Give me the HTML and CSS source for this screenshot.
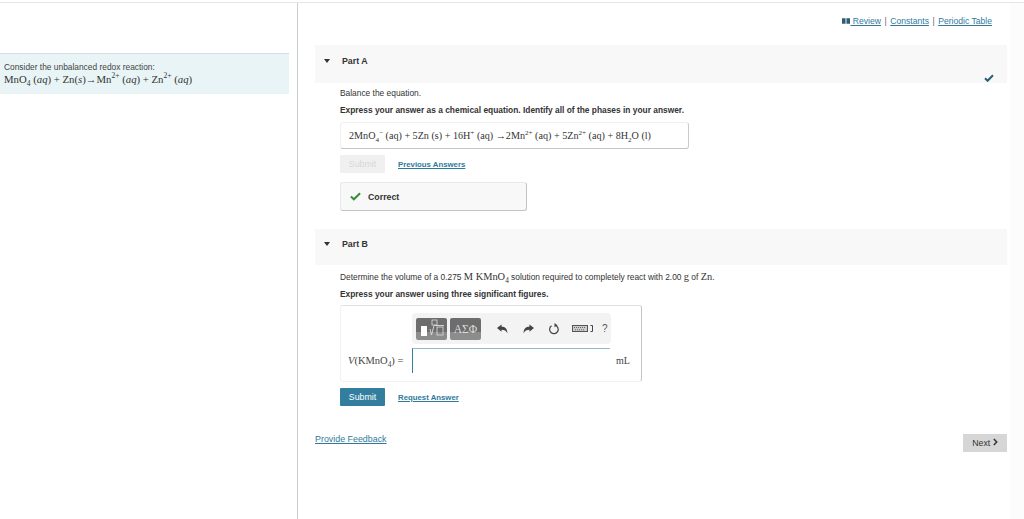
FILE: index.html
```html
<!DOCTYPE html>
<html lang="en">
<head>
<meta charset="utf-8">
<title>Redox reaction</title>
<link rel="stylesheet" href="styles.css">
</head>
<body>
<div class="page">
  <aside class="side">
    <div class="prompt">
      <div>Consider the unbalanced redox reaction:</div>
      <div class="math prompt-eq">MnO<sub>4</sub> (<i>aq</i>) + Zn(<i>s</i>)→Mn<sup>2+</sup> (<i>aq</i>) + Zn<sup>2+</sup> (<i>aq</i>)</div>
    </div>
  </aside>
  <main class="main">
    <nav class="toplinks">
      <svg class="book" viewBox="0 0 9 6" width="8" height="6"><path d="M0 0h4v6H0zM5 0h4v6H5z"/></svg>
      <a>&nbsp;Review</a><span class="sep">|</span><a>Constants</a><span class="sep">|</span><a>Periodic Table</a>
    </nav>

    <section class="part">
      <header class="part-head head-a">
        <span class="caret"></span><strong>Part A</strong>
        <svg class="head-check" viewBox="0 0 10 8" width="10" height="8"><path d="M1 4.2l2.6 2.6L9 1.2" fill="none" stroke="#2b5f75" stroke-width="2"/></svg>
      </header>
      <div class="part-body">
        <p class="line-a1">Balance the equation.</p>
        <p class="bold line-a2">Express your answer as a chemical equation. Identify all of the phases in your answer.</p>
        <div class="answer math">2MnO<sub>4</sub><sup>−</sup> (aq) + 5Zn (s) + 16H<sup>+</sup> (aq) →2Mn<sup>2+</sup> (aq) + 5Zn<sup>2+</sup> (aq) + 8H<sub>2</sub>O (l)</div>
        <div class="actions actions-a">
          <button class="btn btn-off">Submit</button><a class="bold-link">Previous Answers</a>
        </div>
        <div class="correct">
          <svg viewBox="0 0 12 9" width="11" height="9"><path d="M1 4.5l3.2 3L11 1" fill="none" stroke="#3c8a3c" stroke-width="2.200"/></svg>
          <strong>Correct</strong>
        </div>
      </div>
    </section>

    <section class="part part-b">
      <header class="part-head head-b"><span class="caret"></span><strong>Part B</strong></header>
      <div class="part-body">
        <p class="line-b1">Determine the volume of a 0.275 <span class="math mathbig">M KMnO<sub>4</sub></span> solution required to completely react with 2.00 <span class="math mathbig">g</span> of <span class="math mathbig">Zn</span>.</p>
        <p class="bold line-b2">Express your answer using three significant figures.</p>
        <div class="editor">
          <div class="toolbar">
            <div class="tool">
              <svg viewBox="0 0 31 22" width="31" height="22"><rect x="5" y="8" width="6" height="10" fill="#fff"/><rect x="16" y="2" width="5" height="5" fill="none" stroke="#ddd" stroke-width=".8"/><path d="M14 11l1.500 6 2.500-9.500h10" fill="none" stroke="#ddd" stroke-width=".9"/><rect x="21" y="9" width="6" height="8" fill="none" stroke="#ddd" stroke-width=".8"/></svg>
            </div>
            <div class="tool tool-greek math">ΑΣΦ</div>
            <svg class="ic ic-undo" viewBox="0 0 12 10" width="11" height="10"><path d="M0 4l5-4v2.500c4 0 6 2 6.500 7C10 7 8 5.800 5 5.800V8z" fill="#444"/></svg>
            <svg class="ic ic-redo" viewBox="0 0 12 10" width="11" height="10"><path d="M12 4L7 0v2.500C3 2.500 1 4.500.5 9.500 2 7 4 5.800 7 5.800V8z" fill="#444"/></svg>
            <svg class="ic ic-reset" viewBox="0 0 12 12" width="12" height="12"><path d="M7 2.200A4.300 4.300 0 1 1 3.500 2.800" fill="none" stroke="#444" stroke-width="1.200"/><path d="M6.500 0L9.500 2.300 6.500 4.300z" fill="#444"/></svg>
            <svg class="ic ic-keys" viewBox="0 0 22 7" width="22" height="7"><rect x=".5" y=".5" width="15" height="6" fill="#ccc" stroke="#555"/><path d="M2 2.500h12M3 4.800h10" stroke="#666" stroke-dasharray="1 1"/><path d="M18.500 .5h2v6h-2" fill="none" stroke="#444"/></svg>
            <span class="help">?</span>
          </div>
          <div class="input-row">
            <span class="math label"><i>V</i>(KMnO<sub>4</sub>) =</span>
            <div class="field"></div>
            <span class="math unit">mL</span>
          </div>
        </div>
        <div class="actions actions-b">
          <button class="btn btn-on">Submit</button><a class="bold-link">Request Answer</a>
        </div>
      </div>
    </section>

    <footer class="foot">
      <a class="feedback">Provide Feedback</a>
      <button class="next">Next <svg viewBox="0 0 6 9" width="5" height="8"><path d="M1 .8L4.500 4.500 1 8.200" fill="none" stroke="#333" stroke-width="1.800"/></svg></button>
    </footer>
  </main>
  <div class="gutter"></div>
</div>
</body>
</html>
```

FILE: styles.css
```css
* { box-sizing: border-box; }
html, body { margin: 0; height: 100%; overflow: hidden; background: #fff; }
body {
  font-family: "Liberation Sans", Arial, sans-serif;
  font-size: 8.400px;
  color: #333;
}
.page {
  display: flex;
  height: 519px;
  margin-top: 2px;
  border-top: 1px solid #e6e6e6;
  background: #fff;
}
.gutter { width: 14px; flex: none; background: #fcfcfc; }
.side { width: 298px; flex: none; border-right: 1px solid #c9cdd0; padding: 50px 8px 0 0; }
.prompt {
  height: 41px;
  background: #e8f4f6;
  border-top: 1px solid #d5dfe2;
  padding: 8px 0 0 4px;
  line-height: 11px;
  color: #444;
}
.math { font-family: "Liberation Serif", "Times New Roman", serif; }
.prompt-eq { font-size: 10.760px; color: #333; line-height: 13px; }
sub, sup { font-size: 70%; line-height: 0; }
.main { flex: 1; min-width: 0; padding: 0 3px 0 17px; }
.toplinks {
  height: 42px;
  padding-top: 13px;
  padding-right: 15px;
  display: flex;
  justify-content: flex-end;
  align-items: flex-start;
  line-height: 10px;
  color: #2f7a9c;
  font-size: 8.600px;
}
.toplinks a { text-decoration: underline; }
.book { fill: #2b5f75; margin: 2px 0 0; }
.sep { margin: 0 3.500px; color: #666; }
.part-head {
  position: relative;
  display: flex;
  background: #f8f8f8;
  padding-left: 27px;
  font-size: 8.800px;
  color: #333;
}
.head-a { height: 38px; padding-top: 11px; }
.head-b { height: 36px; padding-top: 10px; }
.caret {
  position: absolute;
  left: 9px;
  top: 14px;
  border-left: 3.500px solid transparent;
  border-right: 3.500px solid transparent;
  border-top: 4px solid #333;
}
.head-b .caret { top: 13px; }
.head-check { position: absolute; right: 13px; bottom: 1px; }
.part-body { padding-left: 25px; }
p { margin: 0; line-height: 11px; }
.bold { font-weight: bold; }
.line-a1 { padding-top: 5px; }
.line-a2 { padding-top: 6px; }
.answer {
  width: 349px;
  height: 27px;
  margin-top: 6px;
  padding: 6px 0 0 8px;
  border: 1px solid #f0f0f0;
  border-right-color: #ccc;
  border-bottom-color: #c4c4c4;
  border-radius: 3px;
  font-size: 10.150px;
  line-height: 14px;
  white-space: nowrap;
  color: #333;
}
.actions { display: flex; align-items: center; gap: 13px; }
.actions-a { margin-top: 6px; }
.btn {
  width: 45px;
  height: 18px;
  border: 0;
  padding: 0;
  border-radius: 1px;
  font: 8.800px "Liberation Sans", Arial, sans-serif;
}
.btn-off { background: #f0f0f0; color: #d8d8d8; }
.btn-on { background: #337e9f; color: #fff; }
.bold-link {
  font-weight: bold;
  font-size: 7.800px;
  color: #2f7a9c;
  text-decoration: underline;
}
.correct {
  display: flex;
  align-items: center;
  gap: 7px;
  width: 187px;
  height: 29px;
  margin-top: 9px;
  padding-left: 9px;
  font-size: 8.800px;
  background: #f8f8f8;
  border: 1px solid #e8e8e8;
  border-right-color: #c4c4c4;
  border-bottom-color: #c4c4c4;
  border-radius: 3px;
}
.part-b { margin-top: 18px; }
.line-b1 { padding-top: 6px; }
.mathbig { font-size: 10.400px; }
.line-b2 { padding-top: 6px; }
.editor {
  position: relative;
  width: 302px;
  height: 77px;
  margin-top: 5px;
  border: 1px solid #f2f2f2;
  border-top-color: #e0e0e0;
  border-right-color: #c4c4c4;
  border-radius: 3px;
  color: #444;
}
.toolbar {
  display: flex;
  align-items: center;
  width: 199px;
  height: 31px;
  margin: 7px 0 0 71px;
  padding-left: 4px;
  background: #f3f3f3;
  border-radius: 4px;
}
.tool {
  width: 31px;
  height: 22px;
  margin-right: 3px;
  background: linear-gradient(#6d6d6d 0 65%, #8c8c8c 65%);
  border-radius: 2px;
  display: flex;
  align-items: center;
  justify-content: center;
}
.tool-greek { color: #ddd; font-size: 11.500px; }
.ic { flex: none; }
.ic-undo { margin-left: 13px; }
.ic-redo { margin-left: 15px; }
.ic-reset { margin-left: 14px; }
.ic-keys { margin-left: 12px; }
.help { margin-left: 8px; font-size: 10px; color: #555; }
.input-row { display: flex; align-items: center; height: 25px; margin-top: 4px; padding-left: 7px; }
.label { width: 64px; flex: none; font-size: 10.500px; white-space: nowrap; }
.field {
  width: 198px;
  height: 25px;
  flex: none;
  border-left: 1px solid #337e9f;
  border-top: 1px solid #8fb8c9;
  background: #fff;
}
.unit { margin-left: 6px; font-size: 10px; }
.actions-b { margin-top: 6px; }
.foot { display: flex; justify-content: space-between; align-items: flex-start; margin-top: 26px; }
.feedback { color: #2f7a9c; text-decoration: underline; padding-top: 2px; line-height: 11px; font-size: 8.900px; }
.next {
  width: 44px;
  height: 18px;
  margin-top: 2px;
  border: 0;
  padding: 0;
  background: #d6d6d6;
  color: #333;
  font: 8.800px "Liberation Sans", Arial, sans-serif;
}
```
